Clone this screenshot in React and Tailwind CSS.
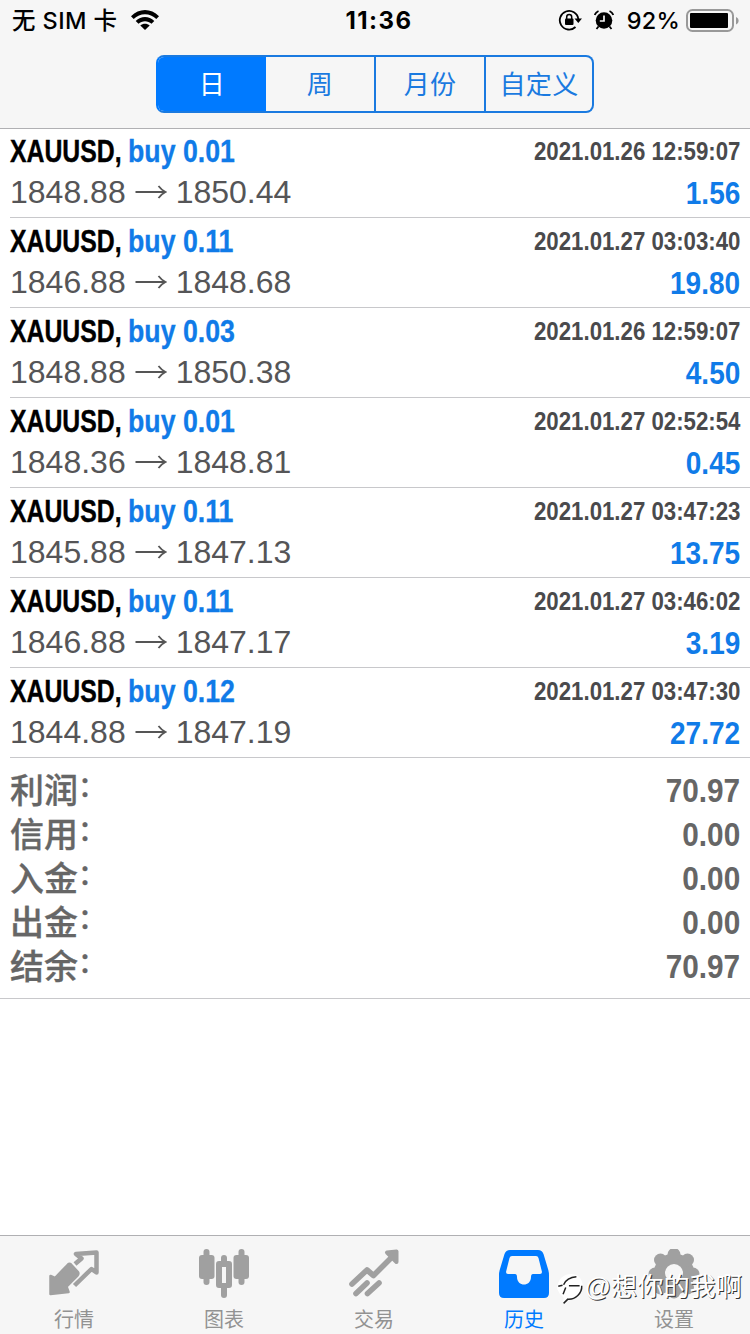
import React, { useState } from 'react';

const deals = [
  { volume: '0.01', open: '1848.88', close: '1850.44', time: '2021.01.26 12:59:07', profit: '1.56' },
  { volume: '0.11', open: '1846.88', close: '1848.68', time: '2021.01.27 03:03:40', profit: '19.80' },
  { volume: '0.03', open: '1848.88', close: '1850.38', time: '2021.01.26 12:59:07', profit: '4.50' },
  { volume: '0.01', open: '1848.36', close: '1848.81', time: '2021.01.27 02:52:54', profit: '0.45' },
  { volume: '0.11', open: '1845.88', close: '1847.13', time: '2021.01.27 03:47:23', profit: '13.75' },
  { volume: '0.11', open: '1846.88', close: '1847.17', time: '2021.01.27 03:46:02', profit: '3.19' },
  { volume: '0.12', open: '1844.88', close: '1847.19', time: '2021.01.27 03:47:30', profit: '27.72' },
];

const summary = [
  { label: '利润', value: '70.97' },
  { label: '信用', value: '0.00' },
  { label: '入金', value: '0.00' },
  { label: '出金', value: '0.00' },
  { label: '结余', value: '70.97' },
];

const periods = ['日', '周', '月份', '自定义'];

const StatusBar = () => (
  <div className="grid h-10 grid-cols-3 items-center pl-3 pr-2.5 font-['Inter','Noto_Sans_CJK_SC',sans-serif] text-black">
    <div className="flex items-center text-[23.5px] font-medium leading-10">
      <span className="w-[119px] whitespace-nowrap pt-px tracking-[0.4px]">无 SIM 卡</span>
      <svg className="mb-px h-5 w-7" viewBox="0 0 28 20">
        <path d="M0 6.2C8-2 20-2 28 6.2L25.3 9C19 2.500 9 2.500 2.700 9Z" />
        <path d="M4.700 11C10 5.800 18 5.800 23.300 11L20.500 13.800C17 10.300 11 10.300 7.500 13.800Z" />
        <path d="M9.300 15.500C12 13 16 13 18.700 15.500L14 20Z" />
      </svg>
    </div>
    <div className="pl-1.5 pt-px text-center text-[24px] font-bold leading-10 tracking-[1.4px]">11:36</div>
    <div className="flex items-center justify-end">
      {/* rotation lock */}
      <svg className="mb-px h-[22px] w-[24px]" viewBox="0 0 24 22">
        <path d="M17.500 18A9.300 9.300 0 1 1 20.300 10" fill="none" stroke="black" strokeWidth="1.800" />
        <path d="M16.500 9.500H24L20.300 14Z" />
        <rect x="7" y="9.500" width="8.500" height="6.500" rx="1" />
        <path d="M8.700 10V8a2.500 2.500 0 0 1 5 0V10" fill="none" stroke="black" strokeWidth="1.500" />
      </svg>
      {/* alarm */}
      <svg className="mb-px ml-3 mr-px h-[20px] w-[20px]" viewBox="0 0 20 20">
        <circle cx="10" cy="10.500" r="8.300" />
        <path d="M10 5.500V11H5.800" fill="none" stroke="#f6f6f6" strokeWidth="1.700" />
        <path d="M.7 5A7 7 0 0 1 4.500 1M15.500 1A7 7 0 0 1 19.300 5M4.500 16.500L2.500 19M15.500 16.500L17.500 19" fill="none" stroke="black" strokeWidth="1.800" />
      </svg>
      <span className="ml-3 pt-px text-[23.5px] font-medium leading-10 tracking-[0.2px]">92%</span>
      <svg className="ml-1.5 h-[23px] w-[54px] shrink-0" viewBox="0 0 54 23">
        <rect x="1" y="1" width="46" height="21" rx="5.500" fill="none" stroke="#999999" strokeWidth="2" />
        <rect x="4" y="4" width="38" height="15" rx="1" />
        <path d="M50 8C53.500 9.500 53.500 14 50 15.500Z" fill="#999999" />
      </svg>
    </div>
  </div>
);

const PeriodTabs = ({ active, onChange }) => (
  <div className="mx-auto mt-[15px] grid h-[58px] w-[438px] grid-cols-[108px_110px_110px_106px] overflow-hidden rounded-lg border-2 border-[#1a7ae0] border-l-[#007aff]">
    {periods.map((period, index) => (
      <button
        key={period}
        onClick={() => onChange(index)}
        className={`pt-0.5 text-[26px] tracking-[0.3px] ${index === 1 || index === 2 ? 'border-r-2 border-[#1a7ae0]' : ''} ${
          index === active ? 'bg-[#007aff] text-white' : 'text-[#1a7ae0]'
        }`}
      >
        {period}
      </button>
    ))}
  </div>
);

const Arrow = () => (
  <svg className="mx-[9px] h-4 w-8 shrink-0" viewBox="0 0 32 16" fill="none" stroke="#555555" strokeWidth="1.800">
    <path d="M0.500 8H30M23.500 2Q26.500 6 30.500 8Q26.500 10 23.500 14" />
  </svg>
);

const DealRow = ({ deal }) => (
  <li className="ml-2.5 h-[90px] border-b border-[#c8c8cb] pr-2.5 pt-px first:h-[89px] first:pt-0">
    <div className="flex h-11 items-center justify-between font-bold">
      <div className="flex text-[32px]">
        <span className="w-[118px] origin-left scale-x-[0.775] whitespace-nowrap text-black [-webkit-text-stroke:0.4px]">XAUUSD,</span>
        <span className="origin-left scale-x-[0.835] whitespace-nowrap text-[#107be8] [-webkit-text-stroke:0.3px]">buy {deal.volume}</span>
      </div>
      <span className="origin-right scale-x-[0.855] whitespace-nowrap text-[26px] text-[#4a4a4c]">{deal.time}</span>
    </div>
    <div className="flex h-[39px] items-center justify-between text-[32px]">
      <div className="flex items-center pb-px text-[#555557]">
        {deal.open}
        <Arrow />
        {deal.close}
      </div>
      <span className="origin-right scale-x-[0.875] font-bold text-[#107be8]">{deal.profit}</span>
    </div>
  </li>
);

const QuotesIcon = () => (
  <svg className="h-[50px] w-[52px]" viewBox="0 0 52 50">
    <path d="M20 15.500Q21.500 14 23 15.500L30 23Q31 25 29.500 26.500L18.500 37.500L20.500 43L2.500 45V27L7 29Z" fill="#a0a0a0" stroke="#a0a0a0" strokeWidth="2.500" strokeLinejoin="round" />
    <path d="M27 15L33.500 9.500L28 5L48.500 3.500V23.500L43.500 20L26.500 36.500" fill="none" stroke="#a0a0a0" strokeWidth="4.500" strokeLinejoin="round" />
  </svg>
);

const ChartsIcon = () => (
  <svg className="h-[50px] w-[52px]" viewBox="0 0 52 50" fill="#a0a0a0">
    <rect x="1" y="6" width="15.500" height="24" rx="3" />
    <rect x="5.500" y="0" width="6" height="36" rx="3" />
    <rect x="35.500" y="6" width="15.500" height="24" rx="3" />
    <rect x="40.500" y="0" width="6" height="36" rx="3" />
    <rect x="23" y="6" width="6" height="10" rx="3" />
    <rect x="23" y="36" width="6" height="13" rx="3" />
    <path fillRule="evenodd" d="M21 12H31A3 3 0 0 1 34 15V36A3 3 0 0 1 31 39H21A3 3 0 0 1 18 36V15A3 3 0 0 1 21 12ZM24 18V34H28V18Z" />
  </svg>
);

const TradeIcon = () => (
  <svg className="h-[50px] w-[52px]" viewBox="0 0 52 50" fill="none" stroke="#a0a0a0" strokeWidth="5.600" strokeLinecap="round" strokeLinejoin="round">
    <path d="M4 35L19 21L25.500 26.500L45 7M8 44.500L19 34M19.500 44.500L31 34" />
    <path d="M39 3.500L48.500 2.500V13Z" fill="#a0a0a0" strokeWidth="4" />
  </svg>
);

const HistoryIcon = () => (
  <svg className="h-[50px] w-[52px]" viewBox="0 0 52 50">
    <path
      fill="#007aff"
      fillRule="evenodd"
      d="M12 1H40Q44 1 45.500 5L50 20Q51 23 51 26V44Q51 49 46 49H6Q1 49 1 44V26Q1 23 2 20L6.500 5Q8 1 12 1ZM14 7Q12 7 11.500 9L8 23Q8 25 10 25H17Q19 25 19 28C19 38 33 38 33 28Q33 25 35 25H42Q44 25 44 23L40.500 9Q40 7 38 7Z"
    />
  </svg>
);

const SettingsIcon = () => (
  <svg className="h-[50px] w-[52px]" viewBox="0 0 52 50">
    <g fill="#a0a0a0">
      <circle cx="26" cy="25" r="20.500" />
      <circle cx="26" cy="5.500" r="6.500" />
      <circle cx="39.500" cy="11" r="6.500" />
      <circle cx="45" cy="25" r="6.500" />
      <circle cx="39.500" cy="39" r="6.500" />
      <circle cx="26" cy="43" r="6.500" />
      <circle cx="12.500" cy="39" r="6.500" />
      <circle cx="7" cy="25" r="6.500" />
      <circle cx="12.500" cy="11" r="6.500" />
    </g>
    <circle cx="26" cy="24" r="9" fill="#f6f6f6" />
  </svg>
);

const navItems = [
  { label: '行情', Icon: QuotesIcon },
  { label: '图表', Icon: ChartsIcon },
  { label: '交易', Icon: TradeIcon },
  { label: '历史', Icon: HistoryIcon, active: true },
  { label: '设置', Icon: SettingsIcon },
];

const Watermark = () => (
  <div className="absolute bottom-[25px] right-2 flex items-center text-[26.2px] leading-[44px] text-white [text-shadow:1px_1px_0.5px_#333]">
    <svg className="mt-1 h-8 w-[28px]" viewBox="0 0 26 30" fill="none">
      <path d="M1 15C1 6 7 1 14 1S25 6 25 13S18 24 10 24L7 29V23Q3 20 1 15Z" fill="white" />
      <path d="M2 12.500L6 11.500M7 11Q10 4 19 3.500M9 13.500L6.500 20M12 12H22M24 12C24.500 19 18 25 11 24.500L7 28.500" stroke="#222222" strokeWidth="1.400" />
    </svg>
    <span>@想你的我啊</span>
  </div>
);

const App = () => {
  const [period, setPeriod] = useState(0);

  return (
    <div className="flex h-[1334px] w-[750px] flex-col overflow-hidden bg-white font-['Liberation_Sans','Noto_Sans_CJK_SC',sans-serif]">
      {/* HEADER */}
      <header className="h-[129px] shrink-0 border-b border-[#b0b0b3] bg-[#f6f6f6]">
        <StatusBar />
        <PeriodTabs active={period} onChange={setPeriod} />
      </header>

      {/* DEALS */}
      <ul>
        {deals.map((deal, index) => (
          <DealRow key={index} deal={deal} />
        ))}
      </ul>

      {/* SUMMARY */}
      <div className="h-[241px] border-b border-[#c8c8cb] px-2.5 pt-[10px] text-[34px] text-[#666666]">
        {summary.map((item) => (
          <div key={item.label} className="flex h-11 items-center justify-between">
            <span className="flex items-center pt-0.5 font-medium [-webkit-text-stroke:0.3px]">
              {item.label}
              <span className="-mt-1.5 text-[28px]">：</span>
            </span>
            <span className="origin-right scale-x-[0.875] font-bold">{item.value}</span>
          </div>
        ))}
      </div>

      {/* TAB BAR */}
      <nav className="relative mt-auto grid h-[99px] shrink-0 grid-cols-5 border-t border-[#b0b0b3] bg-[#f6f6f6]">
        {navItems.map(({ label, Icon, active }) => (
          <div
            key={label}
            className={`flex flex-col items-center pr-0.5 pt-[13px] text-[20px] leading-[43px] ${active ? 'text-[#007aff]' : 'text-[#929292]'}`}
          >
            <Icon />
            {label}
          </div>
        ))}
        <Watermark />
      </nav>
    </div>
  );
};

export default App;
